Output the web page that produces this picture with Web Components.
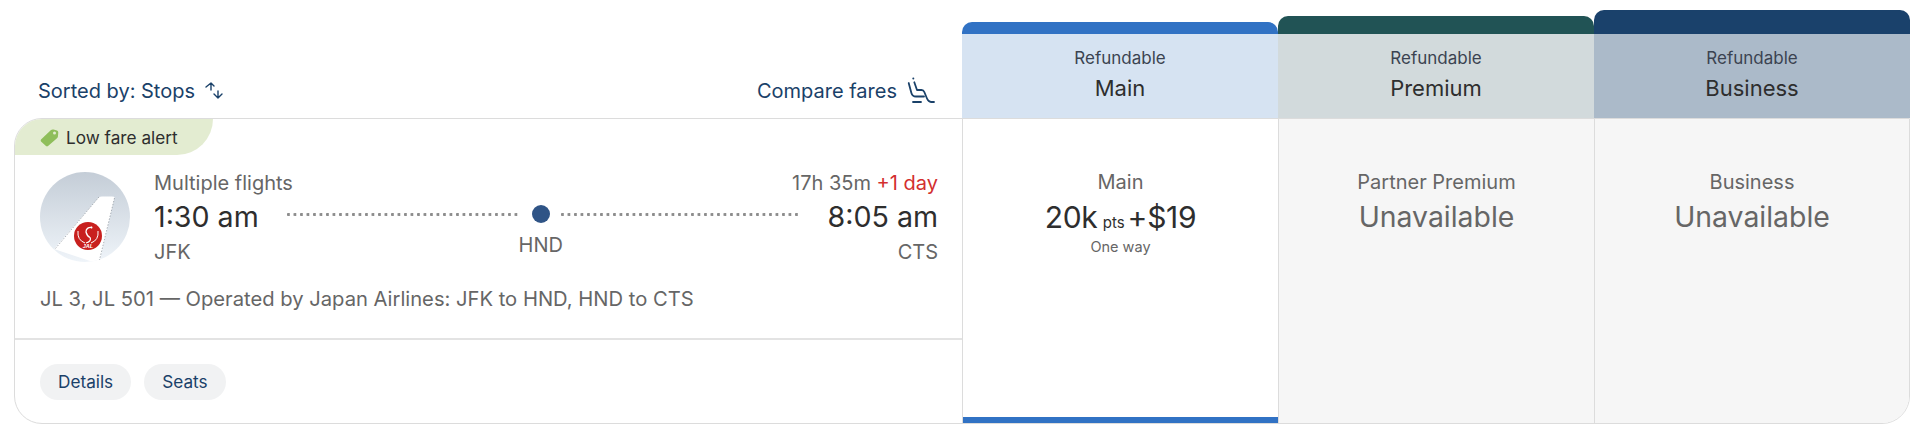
<!DOCTYPE html>
<html>
<head>
<meta charset="utf-8">
<title>Fares</title>
<style>
  html, body { margin: 0; background: #fff; }
  body { font-family: "Inter", "Liberation Sans", sans-serif; color: #2e2e2e; }
</style>
</head>
<body>
<fare-table></fare-table>

<script>
class FareHeader extends HTMLElement {
    connectedCallback() {
        const top = this.getAttribute('top') || 22;
        const bar = this.getAttribute('bar');
        const tint = this.getAttribute('tint');
        this.attachShadow({ mode: 'open' }).innerHTML = `
            <style>
                :host { display: block; align-self: end; }
                .bar { height: ${34 - top}px; background: ${bar}; border-radius: 10px 10px 0 0; }
                .tint { height: 84px; box-sizing: border-box; padding-top: 12px; background: ${tint}; text-align: center; }
                .kicker { font-size: 17px; line-height: 24px; color: #3b4351; }
                .name { font-size: 22px; line-height: 34px; margin-top: 1px; color: #2e2e2e; }
            </style>
            <div class="bar"></div>
            <div class="tint">
                <div class="kicker">Refundable</div>
                <div class="name">${this.getAttribute('name')}</div>
            </div>
        `;
    }
}

class FareCell extends HTMLElement {
    connectedCallback() {
        this.attachShadow({ mode: 'open' }).innerHTML = `
            <style>
                :host { display: block; box-sizing: border-box; padding-top: 51px; text-align: center; border-left: 1px solid #dcdcdc; position: relative; }
                :host([off]) { background: #f6f6f6; }
                :host([accent])::after { content: ""; position: absolute; left: 0; right: 0; bottom: 0; height: 6px; background: #3172c4; }
                .label { font-size: 20px; line-height: 24px; color: #666; }
            </style>
            <div class="label">${this.getAttribute('label')}</div>
            <slot></slot>
        `;
    }
}

class FarePrice extends HTMLElement {
    connectedCallback() {
        this.attachShadow({ mode: 'open' }).innerHTML = `
            <style>
                :host { display: block; color: #2e2e2e; }
                .price { font-size: 30px; line-height: 36px; letter-spacing: -0.3px; margin-top: 5px; }
                .pts { font-size: 15px; letter-spacing: 0; margin: 0 3px 0 1px; }
                .way { font-size: 14.5px; line-height: 20px; margin-top: -4px; color: #666; }
            </style>
            <div class="price">20k<span class="pts"> pts</span>+$19</div>
            <div class="way">One way</div>
        `;
    }
}

class FareUnavailable extends HTMLElement {
    connectedCallback() {
        this.attachShadow({ mode: 'open' }).innerHTML = `
            <style>
                :host { display: block; font-size: 28.4px; line-height: 36px; margin-top: 5px; color: #666; }
            </style>
            Unavailable
        `;
    }
}

class JalLogo extends HTMLElement {
    connectedCallback() {
        this.attachShadow({ mode: 'open' }).innerHTML = `
            <style>
                :host { display: block; width: 90px; height: 90px; margin-top: 1px; flex: none; }
                svg { display: block; }
            </style>
            <svg width="90" height="90" viewBox="0 0 90 90">
                <defs>
                    <linearGradient id="sky" x1="0" y1="0" x2="0" y2="1">
                        <stop offset="0" stop-color="#c4cdd7"/>
                        <stop offset="1" stop-color="#eff4f9"/>
                    </linearGradient>
                    <clipPath id="disc"><circle cx="45" cy="45" r="45"/></clipPath>
                </defs>
                <circle cx="45" cy="45" r="45" fill="url(#sky)"/>
                <path d="M59 25 Q60 24.500 62 24.500 L72 24.500 Q75 24.500 74.500 26 L59 92 L14 77 Z" fill="#fff" clip-path="url(#disc)"/>
                <path d="M59 25 L15 77 M74.500 26 L59.500 88" fill="none" stroke="#8a929b" stroke-width=".7" stroke-dasharray="1.500 1.500"/>
                <circle cx="48" cy="64" r="14" fill="#c8201e"/>
                <path d="M52 55.500 Q46 55 46 60 Q47 64 50 65.500 Q52 69 46 71" fill="none" stroke="#fff" stroke-width="1.300"/>
                <circle cx="51.500" cy="55.500" r="1" fill="#fff"/>
                <path d="M38 59 Q37 68 45 71 M58 59 Q59 68 51 71" fill="none" stroke="#fff" stroke-width="1"/>
                <text x="48" y="76" text-anchor="middle" font-family="Liberation Sans" font-size="5.500" font-weight="700" font-style="italic" fill="#fff">JAL</text>
            </svg>
        `;
    }
}

class FlightRoute extends HTMLElement {
    connectedCallback() {
        this.attachShadow({ mode: 'open' }).innerHTML = `
            <style>
                :host { display: grid; grid-template-columns: auto 1fr auto; grid-template-rows: 24px 41px 28px; flex: 1; column-gap: 28px; color: #666; }
                .small { font-size: 20px; line-height: 24px; }
                .time { font-size: 28.6px; line-height: 38px; padding-top: 3px; color: #2e2e2e; }
                .end { text-align: right; }
                .top { grid-column: 1 / 4; grid-row: 1; display: flex; justify-content: space-between; }
                .red { color: #d32f2f; }
                .track { grid-column: 2; grid-row: 2 / 4; display: flex; }
                .leg { height: 3px; margin-top: 18px; background: radial-gradient(circle at 1.500px 1.500px, #8d8d8d 1.400px, transparent 1.600px) 0 0 / 6.500px 3px repeat-x; }
                .a { width: 234px; }
                .b { flex: 1; }
                .stop { width: 40px; flex: none; text-align: center; }
                .dot { width: 18px; height: 18px; border-radius: 50%; background: #2f5486; margin: 10px auto 0; }
                .code { font-size: 20px; line-height: 24px; margin: 10px -10px 0; }
            </style>
            <div class="top small"><span>Multiple flights</span><span>17h 35m <span class="red">+1 day</span></span></div>
            <div class="time">1:30 am</div>
            <div class="track">
                <div class="leg a"></div>
                <div class="stop"><div class="dot"></div><div class="code">HND</div></div>
                <div class="leg b"></div>
            </div>
            <div class="time end">8:05 am</div>
            <div class="small" style="grid-column:1;grid-row:3;padding-top:4px">JFK</div>
            <div class="small end" style="grid-column:3;grid-row:3;padding-top:4px">CTS</div>
        `;
    }
}

class LowFareTab extends HTMLElement {
    connectedCallback() {
        this.attachShadow({ mode: 'open' }).innerHTML = `
            <style>
                :host { display: flex; align-items: center; gap: 7px; width: 198px; height: 36px; box-sizing: border-box; padding-left: 25px; background: #e3ecd1; border-radius: 0 0 36px 0; font-size: 17.2px; color: #2e2e2e; }
                svg { display: block; flex: none; }
            </style>
            <svg width="19" height="19" viewBox="0 0 19 19"><path d="M1 11.500 L11 2 Q12 1.200 13.500 1.500 L17 2.500 Q18.300 3 18.300 4.500 L18 8 Q18 9.500 17 10.300 L8 18 Q7 18.800 6 18 L1 13.500 Q.3 12.500 1 11.500 Z" fill="#8fbe5b"/><circle cx="14.500" cy="5" r="1.500" fill="#e3ecd1"/></svg>
            <span>Low fare alert</span>
        `;
    }
}

class FlightCard extends HTMLElement {
    connectedCallback() {
        this.attachShadow({ mode: 'open' }).innerHTML = `
            <style>
                :host { display: flex; flex-direction: column; min-width: 0; }
                .main { flex: 1; padding: 16px 24px 0 25px; }
                .row { display: flex; gap: 24px; height: 91px; }
                .ops { font-size: 20.200px; line-height: 24px; color: #666; margin-top: 25px; }
                .foot { display: flex; gap: 13px; align-items: flex-start; height: 85px; box-sizing: border-box; padding: 24px 25px 0; border-top: 2px solid #e3e3e3; }
                .chip { height: 36px; line-height: 36px; padding: 0 18px; border-radius: 18px; background: #f1f2f3; color: #1a4169; font-size: 17.2px; }
            </style>
            <low-fare-tab></low-fare-tab>
            <div class="main">
                <div class="row"><jal-logo></jal-logo><flight-route></flight-route></div>
                <div class="ops">JL 3, JL 501 — Operated by Japan Airlines: JFK to HND, HND to CTS</div>
            </div>
            <div class="foot"><span class="chip">Details</span><span class="chip">Seats</span></div>
        `;
    }
}

class FareToolbar extends HTMLElement {
    connectedCallback() {
        this.attachShadow({ mode: 'open' }).innerHTML = `
            <style>
                :host { display: flex; align-self: end; justify-content: space-between; align-items: center; height: 36px; padding: 0 27px 9px 24px; font-size: 20px; color: #1a4169; }
                .item { display: flex; align-items: center; gap: 10px; }
                svg { display: block; fill: none; stroke: #1a4169; stroke-linecap: round; stroke-linejoin: round; }
            </style>
            <div class="item">Sorted by: Stops
                <svg width="18" height="18" viewBox="0 0 18 18" stroke-width="1.400"><path d="M6 8V1L1 5M6 1L9 4"/><path d="M13 9V16L9 12M13 16L17 12"/></svg>
            </div>
            <div class="item">Compare fares
                <svg width="28" height="28" viewBox="0 0 28 28" stroke-width="1.800"><circle cx="6.300" cy="1.500" r="1" fill="#1a4169" stroke="none"/><path d="M1.700 6L4.400 16Q5.300 19.500 9 19.500H17"/><path d="M7.300 5.300L10 13H14.500Q16.500 13 17.300 15L20 21.500Q21.500 25 24 25H27"/><path d="M6 25H14"/></svg>
            </div>
        `;
    }
}

class FareTable extends HTMLElement {
    connectedCallback() {
        this.attachShadow({ mode: 'open' }).innerHTML = `
            <style>
                :host { display: block; box-sizing: border-box; width: 1922px; height: 434px; padding: 10px 12px 0 14px; }
                .head, .body { display: grid; grid-template-columns: 948px 316px 316px 316px; }
                .head { height: 108px; }
                .body { height: 306px; box-sizing: border-box; border: 1px solid #dcdcdc; border-radius: 28px 0 28px 28px; overflow: hidden; grid-template-columns: 947px 316px 316px 315px; }
            </style>
            <div class="head">
                <fare-toolbar></fare-toolbar>
                <fare-header top="22" bar="#3172c4" tint="#d6e3f2" name="Main"></fare-header>
                <fare-header top="16" bar="#215355" tint="#d2dadc" name="Premium"></fare-header>
                <fare-header top="10" bar="#1a416b" tint="#abbac9" name="Business"></fare-header>
            </div>
            <div class="body">
                <flight-card></flight-card>
                <fare-cell label="Main" accent><fare-price></fare-price></fare-cell>
                <fare-cell label="Partner Premium" off><fare-unavailable></fare-unavailable></fare-cell>
                <fare-cell label="Business" off><fare-unavailable></fare-unavailable></fare-cell>
            </div>
        `;
    }
}

customElements.define('fare-header', FareHeader);
customElements.define('fare-cell', FareCell);
customElements.define('fare-price', FarePrice);
customElements.define('fare-unavailable', FareUnavailable);
customElements.define('jal-logo', JalLogo);
customElements.define('flight-route', FlightRoute);
customElements.define('low-fare-tab', LowFareTab);
customElements.define('flight-card', FlightCard);
customElements.define('fare-toolbar', FareToolbar);
customElements.define('fare-table', FareTable);
</script>
</body>
</html>
